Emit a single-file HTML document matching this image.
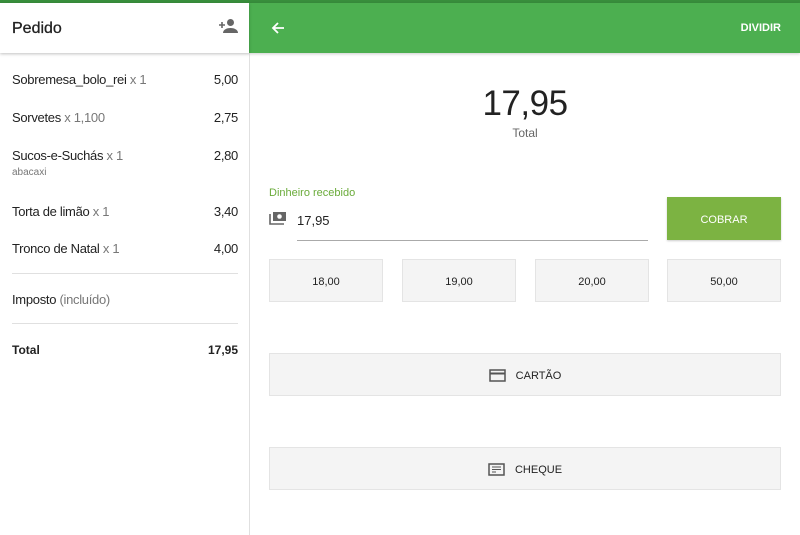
<!DOCTYPE html>
<html><head><meta charset="utf-8"><style>
*{margin:0;padding:0;box-sizing:border-box}
body{width:800px;height:535px;overflow:hidden;background:#fff;font-family:"Liberation Sans",sans-serif;position:relative;color:#222}
.abs{position:absolute}
.topstrip{left:0;top:0;width:800px;height:3px;background:#388e3c}
.lefthead{left:0;top:3px;width:249px;height:50px;background:#fff;box-shadow:0 1px 3px rgba(0,0,0,.25);z-index:2}
.green{left:249px;top:3px;width:551px;height:50px;background:#4caf50;box-shadow:0 1px 3px rgba(0,0,0,.2)}
.divider{left:249px;top:53px;width:1px;height:482px;background:#e0e0e0}
.row{left:12px;width:226px;font-size:13px;color:#222;letter-spacing:-0.3px}
.row .q{color:#777}
.row .p{position:absolute;right:0;top:0}
.hr{left:12px;width:226px;height:1px;background:#e0e0e0}
.btn{background:#f4f4f4;border:1px solid #e4e4e4;font-size:11px;color:#222;display:flex;align-items:center;justify-content:center;padding-top:2px}
</style></head><body>
<div class="abs topstrip"></div>
<div class="abs lefthead">
  <div class="abs" style="left:12px;top:17px;font-size:16px;color:#222;-webkit-text-stroke:0.3px #222">Pedido</div>
  <svg class="abs" style="left:218px;top:15px" width="20" height="16" viewBox="0 0 20 16"><circle cx="12.5" cy="4.5" r="3.5" fill="#666"/><path d="M5 15c0-3.5 4-5 7.5-5s7.5 1.5 7.5 5z" fill="#666"/><path d="M1 7h6M4 4v6" stroke="#666" stroke-width="1.6"/></svg>
</div>
<div class="abs green">
  <svg class="abs" style="left:22px;top:18px" width="14" height="14" viewBox="0 0 14 14"><path d="M13 7H2M7 2L2 7l5 5" stroke="#fff" stroke-width="1.8" fill="none"/></svg>
  <div class="abs" style="right:19px;top:19px;font-size:11px;font-weight:bold;color:#fff">DIVIDIR</div>
</div>
<div class="abs divider"></div>

<div class="abs row" style="top:72px">Sobremesa_bolo_rei <span class="q">x 1</span><span class="p">5,00</span></div>
<div class="abs row" style="top:110px">Sorvetes <span class="q">x 1,100</span><span class="p">2,75</span></div>
<div class="abs row" style="top:148px">Sucos-e-Suchás <span class="q">x 1</span><span class="p">2,80</span></div>
<div class="abs" style="left:12px;top:167px;font-size:10px;color:#777">abacaxi</div>
<div class="abs row" style="top:204px">Torta de limão <span class="q">x 1</span><span class="p">3,40</span></div>
<div class="abs row" style="top:241px">Tronco de Natal <span class="q">x 1</span><span class="p">4,00</span></div>
<div class="abs hr" style="top:273px"></div>
<div class="abs row" style="top:292px">Imposto <span class="q">(incluído)</span></div>
<div class="abs hr" style="top:323px"></div>
<div class="abs row" style="top:343px;font-weight:bold;font-size:12px;letter-spacing:0">Total<span class="p">17,95</span></div>

<div class="abs" style="left:250px;width:550px;top:84px;text-align:center;font-size:35px;color:#222;letter-spacing:-0.5px">17,95</div>
<div class="abs" style="left:250px;width:550px;top:126px;text-align:center;font-size:12px;color:#666">Total</div>

<div class="abs" style="left:269px;top:187px;font-size:11px;color:#6aab3a">Dinheiro recebido</div>
<svg class="abs" style="left:269px;top:211px" width="18" height="14" viewBox="0 0 18 14"><path d="M1 3v10h14" stroke="#666" stroke-width="1.6" fill="none"/><rect x="4" y="1" width="13" height="9" fill="#666"/><circle cx="10.5" cy="5.5" r="2.3" fill="#fff"/></svg>
<div class="abs" style="left:297px;top:213px;font-size:13px;color:#222">17,95</div>
<div class="abs" style="left:297px;top:240px;width:351px;height:1px;background:#aaa"></div>
<div class="abs" style="left:667px;top:197px;width:114px;height:43px;background:#7cb342;color:#fff;font-size:11px;display:flex;align-items:center;justify-content:center;padding-top:2px;box-shadow:0 1px 2px rgba(0,0,0,.2)">COBRAR</div>

<div class="abs btn" style="left:269px;top:259px;width:114px;height:43px">18,00</div>
<div class="abs btn" style="left:402px;top:259px;width:114px;height:43px">19,00</div>
<div class="abs btn" style="left:535px;top:259px;width:114px;height:43px">20,00</div>
<div class="abs btn" style="left:667px;top:259px;width:114px;height:43px">50,00</div>

<div class="abs btn" style="left:269px;top:353px;width:512px;height:43px">
  <svg width="17" height="13" viewBox="0 0 17 13" style="margin-right:10px"><rect x="1" y="1" width="15" height="11" fill="none" stroke="#555" stroke-width="1.5"/><rect x="1" y="3.5" width="15" height="2" fill="#555"/></svg>CARTÃO</div>
<div class="abs btn" style="left:269px;top:447px;width:512px;height:43px">
  <svg width="17" height="13" viewBox="0 0 17 13" style="margin-right:10px"><rect x="1" y="1" width="15" height="11" fill="none" stroke="#555" stroke-width="1.5"/><path d="M4 4h9M4 6.5h9M4 9h4" stroke="#555" stroke-width="1"/></svg>CHEQUE</div>
</body></html>
